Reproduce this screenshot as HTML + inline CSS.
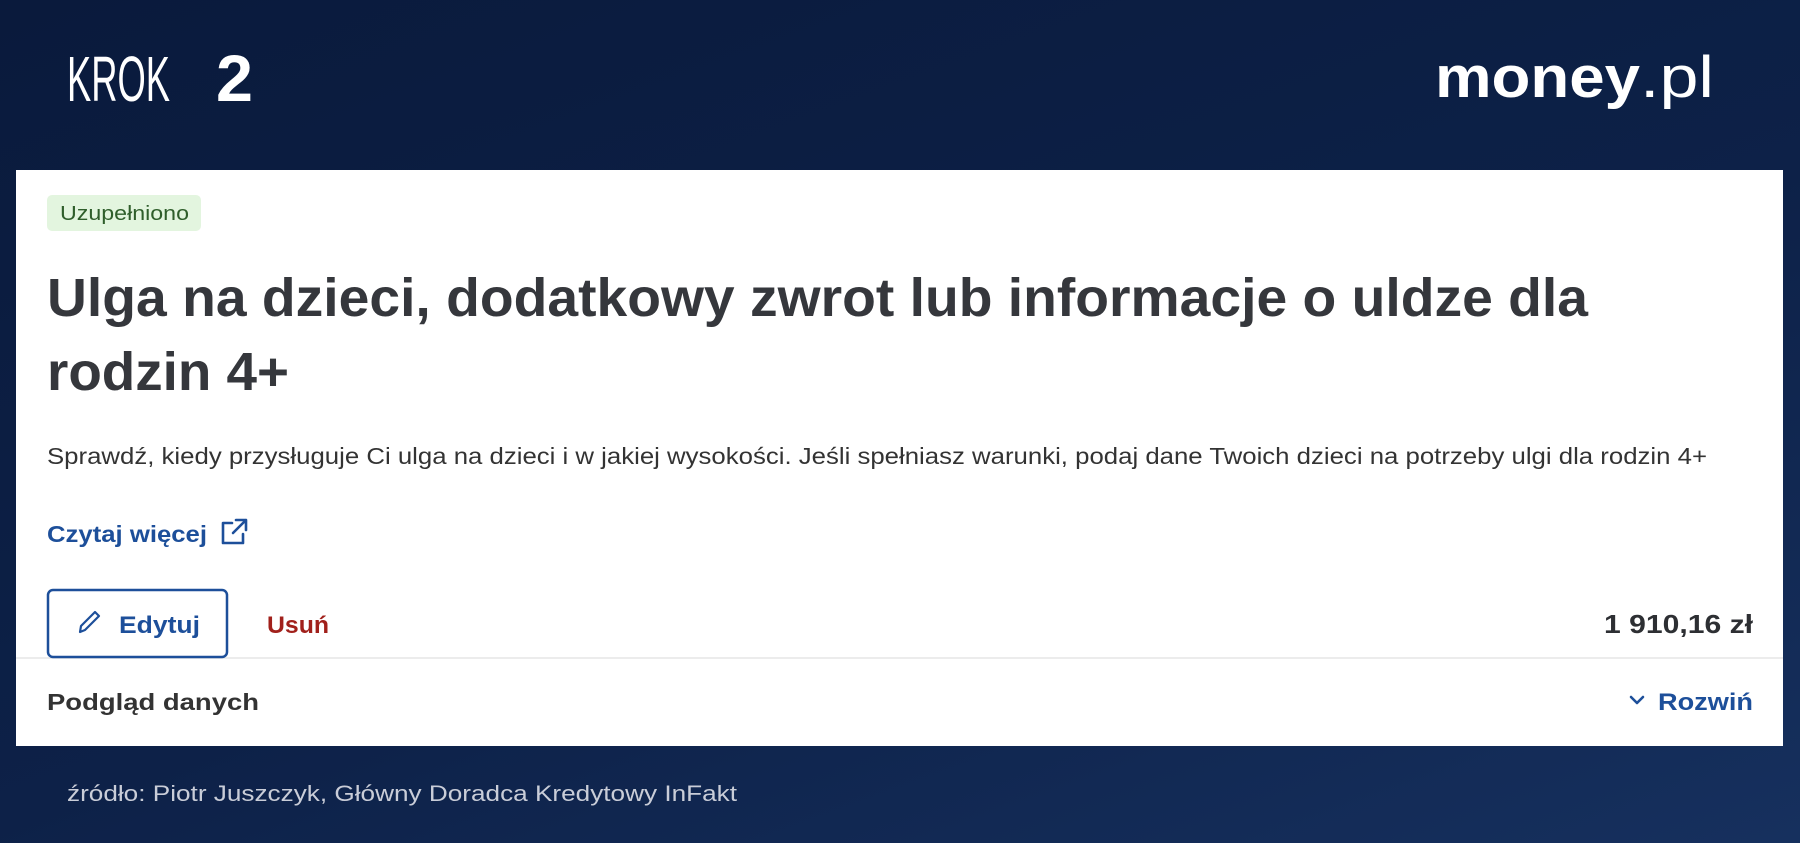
<!DOCTYPE html>
<html><head><meta charset="utf-8"><style>
html,body{margin:0;padding:0;width:1800px;height:843px;overflow:hidden}
body{background:linear-gradient(160deg,#0a1a3c 0%,#0d2148 55%,#16305e 100%)}
svg{display:block}
</style></head><body>
<svg width="1800" height="843" viewBox="0 0 1800 843" xmlns="http://www.w3.org/2000/svg" font-family="Liberation Sans, sans-serif">
<text x="67" y="101" font-size="64" fill="#fff" textLength="103" lengthAdjust="spacingAndGlyphs">KROK</text>
<text x="216" y="101" font-size="66" font-weight="bold" fill="#fff" textLength="37" lengthAdjust="spacingAndGlyphs">2</text>
<text x="1435" y="97" font-size="58" font-weight="bold" fill="#fff" textLength="205" lengthAdjust="spacingAndGlyphs">money</text>
<text x="1640" y="97" font-size="58" fill="#fff" textLength="74" lengthAdjust="spacingAndGlyphs">.pl</text>

<rect x="16" y="170" width="1767" height="576" fill="#fff"/>
<rect x="47" y="195" width="154" height="36" rx="5" fill="#e3f5df"/>
<text x="60" y="220" font-size="20" fill="#2f5e2b" textLength="129" lengthAdjust="spacingAndGlyphs">Uzupełniono</text>
<text x="47" y="316" font-size="54" font-weight="bold" fill="#35373c" textLength="1541" lengthAdjust="spacingAndGlyphs">Ulga na dzieci, dodatkowy zwrot lub informacje o uldze dla</text>
<text x="47" y="390" font-size="54" font-weight="bold" fill="#35373c" textLength="242" lengthAdjust="spacingAndGlyphs">rodzin 4+</text>
<text x="47" y="464" font-size="23" fill="#333" textLength="1660" lengthAdjust="spacingAndGlyphs">Sprawdź, kiedy przysługuje Ci ulga na dzieci i w jakiej wysokości. Jeśli spełniasz warunki, podaj dane Twoich dzieci na potrzeby ulgi dla rodzin 4+</text>
<text x="47" y="542" font-size="23" font-weight="bold" fill="#1d4f9a" textLength="160" lengthAdjust="spacingAndGlyphs">Czytaj więcej</text>
<g fill="none" stroke="#1d4f9a" stroke-width="2.6" stroke-linecap="round" stroke-linejoin="round">
<path d="M232 523 H223 V543 H243 V534"/><path d="M236 520 H246 V530 M246 520 L233 533"/>
</g>
<line x1="16" y1="658" x2="1783" y2="658" stroke="#e6e6e6" stroke-width="1.5"/>
<rect x="48" y="590" width="179" height="67" rx="5" fill="#fff" stroke="#1d4f9a" stroke-width="2.5"/>
<g fill="none" stroke="#1d4f9a" stroke-width="2.2" stroke-linejoin="round">
<path d="M80 632 L81 626 L95 612 L99 616 L85 630 Z"/>
</g>
<text x="119" y="633" font-size="24" font-weight="bold" fill="#1d4f9a" textLength="81" lengthAdjust="spacingAndGlyphs">Edytuj</text>
<text x="267" y="633" font-size="24" font-weight="bold" fill="#a1201b" textLength="62" lengthAdjust="spacingAndGlyphs">Usuń</text>
<text x="1604" y="633" font-size="26" font-weight="bold" fill="#2d2f33" textLength="149" lengthAdjust="spacingAndGlyphs">1 910,16 zł</text>
<text x="47" y="710" font-size="23" font-weight="bold" fill="#333" textLength="212" lengthAdjust="spacingAndGlyphs">Podgląd danych</text>
<path d="M1631 697 L1637 703 L1643 697" fill="none" stroke="#1d4f9a" stroke-width="2.6" stroke-linecap="round" stroke-linejoin="round"/>
<text x="1658" y="710" font-size="24" font-weight="bold" fill="#1d4f9a" textLength="95" lengthAdjust="spacingAndGlyphs">Rozwiń</text>

<text x="67" y="801" font-size="22" fill="#c9cdd8" textLength="670" lengthAdjust="spacingAndGlyphs">źródło: Piotr Juszczyk, Główny Doradca Kredytowy InFakt</text>
</svg>
</body></html>
